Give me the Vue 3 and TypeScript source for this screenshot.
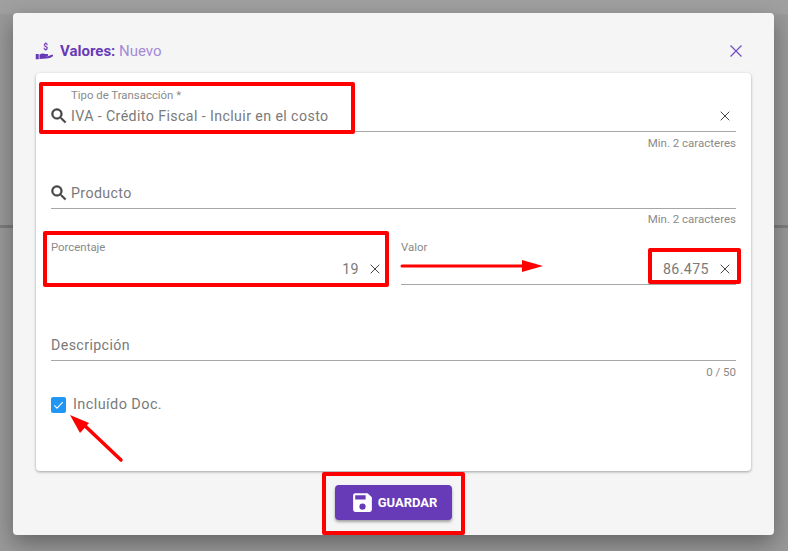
<template>
  <div class="backdrop">
    <div class="dialog">
      <header class="dialog-header">
        <svg class="title-icon" viewBox="0 0 24 24" width="18" height="18">
          <path d="M1 16h4v7H1z M6 22.500v-6l2.400-.9c2-.6 3.600-.4 5 .5h3c1.200 0 1.700 1.700.4 2.400l-3.800.4 4 .2 5.500-2.100c1.400-.4 2.300 1.100 1.200 2-2.500 1.900-5.400 3-8.700 3z" fill="#673ab7" />
          <text x="14" y="10" class="dollar">$</text>
        </svg>
        <span class="title"><b>Valores:</b> Nuevo</span>
        <svg class="close" viewBox="0 0 14 14" width="14" height="14">
          <path d="M1.500 1.500l11 11M12.500 1.500l-11 11" stroke="#7350c4" stroke-width="1.300" fill="none" />
        </svg>
      </header>

      <section class="card">
        <div class="field first">
          <label class="float-label indented">Tipo de Transacción *</label>
          <div class="control">
            <svg class="search" viewBox="0 0 24 24" width="20" height="20"><path :d="searchPath" /></svg>
            <span class="value">IVA - Crédito Fiscal - Incluir en el costo</span>
            <svg class="clear" viewBox="0 0 10 10" width="10" height="10"><path :d="clearPath" /></svg>
          </div>
        </div>
        <div class="hint">Min. 2 caracteres</div>

        <div class="field second">
          <div class="control">
            <svg class="search" viewBox="0 0 24 24" width="20" height="20"><path :d="searchPath" /></svg>
            <span class="value">Producto</span>
          </div>
        </div>
        <div class="hint">Min. 2 caracteres</div>

        <div class="row">
          <div v-for="item in amounts" :key="item.label" class="field amount">
            <label class="float-label">{{ item.label }}</label>
            <div class="control right">
              <span class="value">{{ item.value }}</span>
              <svg class="clear" viewBox="0 0 10 10" width="10" height="10"><path :d="clearPath" /></svg>
            </div>
          </div>
        </div>

        <div class="field description">
          <div class="control">
            <span class="value">Descripción</span>
          </div>
        </div>
        <div class="hint">0 / 50</div>

        <div class="check">
          <span class="box">
            <svg viewBox="0 0 16 16" width="16" height="16"><path d="M3.500 8.300l3 3 6-6.300" stroke="#fff" stroke-width="1.200" fill="none" /></svg>
          </span>
          <span class="check-label">Incluído Doc.</span>
        </div>
      </section>

      <footer class="dialog-footer">
        <button class="save" type="button">
          <svg viewBox="0 0 24 24" width="25" height="25"><path d="M17 3H5a2 2 0 0 0-2 2v14a2 2 0 0 0 2 2h14a2 2 0 0 0 2-2V7zm-5 16a3 3 0 1 1 0-6 3 3 0 0 1 0 6zm3-10H5V5h10z" fill="#fff" /></svg>
          <span>GUARDAR</span>
        </button>
      </footer>
    </div>

    <!-- red annotations drawn over the screenshot -->
    <div v-for="mark in marks" :key="mark.left" class="mark" :style="mark" />
    <svg class="arrows" viewBox="0 0 788 551" width="788" height="551">
      <path d="M402 266H523" stroke="#f00" stroke-width="3" stroke-linecap="round" />
      <path d="M522 260L543 266 522 272z" fill="#f00" />
      <path d="M121 460L83 424" stroke="#f00" stroke-width="3.500" stroke-linecap="round" />
      <path d="M70 415L89 423 80 433z" fill="#f00" />
    </svg>
  </div>
</template>

<script setup lang="ts">
const searchPath =
  'M15.500 14h-.79l-.28-.27A6.471 6.471 0 0 0 16 9.500 6.500 6.500 0 1 0 9.500 16c1.610 0 3.090-.59 4.230-1.570l.27.28v.79l5 4.990L20.490 19l-4.990-5zm-6 0C7.010 14 5 11.990 5 9.500S7.010 5 9.500 5 14 7.010 14 9.500 11.990 14 9.500 14z'
const clearPath = 'M.7.7l8.600 8.600M9.300.7L.7 9.300'

const amounts = [
  { label: 'Porcentaje', value: '19' },
  { label: 'Valor', value: '86.475' },
]

const marks = [
  { left: '39px', top: '82px', width: '316px', height: '52px' },
  { left: '43px', top: '231px', width: '346px', height: '56px' },
  { left: '648px', top: '248px', width: '93px', height: '36px' },
  { left: '322px', top: '472px', width: '143px', height: '63px' },
]
</script>

<style scoped>
.backdrop {
  position: relative;
  width: 788px;
  height: 551px;
  overflow: hidden;
  background: linear-gradient(
    #a0a0a0 14px,
    #999 14px,
    #999 225px,
    #7d7d7d 225px,
    #7d7d7d 228px,
    #999 228px
  );
  font-family: Roboto, "Liberation Sans", sans-serif;
  color: #757575;
}

.dialog {
  position: absolute;
  left: 13px;
  top: 13px;
  width: 761px;
  height: 522px;
  display: flex;
  flex-direction: column;
  padding: 0 23px;
  box-sizing: border-box;
  background: #f5f5f5;
  border-radius: 4px;
  box-shadow: 0 8px 22px rgba(0, 0, 0, 0.35);
}

.dialog-header {
  height: 60px;
  flex: none;
  display: flex;
  align-items: center;
  padding-top: 16px;
  box-sizing: border-box;
}

.title-icon {
  margin-left: -1px;
  margin-right: 7px;
  flex: none;
}

.dollar {
  font-size: 11px;
  font-weight: 700;
  fill: #673ab7;
  text-anchor: middle;
}

.title {
  font-size: 15px;
  color: #a48ad8;
}

.title b {
  color: #673ab7;
  font-weight: 700;
}

.close {
  margin-left: auto;
  margin-right: 8px;
}

.card {
  height: 398px;
  flex: none;
  padding: 0 15px;
  box-sizing: border-box;
  background: #fff;
  border-radius: 4px;
  box-shadow: 0 1px 3px rgba(0, 0, 0, 0.35);
}

.field {
  position: relative;
  border-bottom: 1px solid #a6a6a6;
  display: flex;
  flex-direction: column;
  justify-content: flex-end;
  box-sizing: border-box;
}

.first {
  height: 59px;
}

.second {
  height: 55px;
}

.second + .hint {
  margin-top: -1px;
}

.row {
  display: flex;
  gap: 15px;
}

.amount {
  flex: 1;
  height: 55px;
}

.description {
  height: 76px;
}

.float-label {
  position: absolute;
  left: 0;
  top: 11px;
  font-size: 11.400px;
  line-height: 12px;
  color: #8a8a8a;
}

.float-label.indented {
  left: 20px;
  top: 16px;
}

.control {
  height: 30px;
  display: flex;
  align-items: center;
}

.control.right {
  justify-content: flex-end;
}

.value {
  font-size: 14.200px;
  letter-spacing: 0.4px;
  color: #7a7a7a;
}

.search {
  fill: #444;
  stroke: #444;
  stroke-width: 0.6;
  margin-left: -2.500px;
  margin-right: 2.500px;
  flex: none;
}

.clear {
  stroke: #444;
  stroke-width: 1;
  fill: none;
  flex: none;
  margin-left: 11px;
  margin-right: 6px;
}

.first .clear {
  margin-left: auto;
}

.hint {
  height: 22px;
  padding-top: 5px;
  box-sizing: border-box;
  text-align: right;
  font-size: 11.500px;
  line-height: 13px;
  color: #8a8a8a;
}

.check {
  margin-top: 13px;
  display: flex;
  align-items: center;
  gap: 7px;
}

.box {
  width: 15px;
  height: 16px;
  border-radius: 2px;
  background: #2196f3;
  display: flex;
  align-items: center;
  justify-content: center;
}

.check-label {
  font-size: 14.500px;
  letter-spacing: 0.4px;
  color: #7a7a7a;
}

.dialog-footer {
  flex: 1;
  display: flex;
  justify-content: center;
  align-items: center;
  padding-bottom: 1px;
}

.save {
  width: 117px;
  height: 35px;
  display: flex;
  align-items: center;
  justify-content: center;
  gap: 3px;
  padding: 0;
  border: 0;
  border-radius: 4px;
  background: #673ab7;
  color: #fff;
  font-family: inherit;
  font-size: 13px;
  font-weight: 700;
  box-shadow: 0 2px 3px rgba(0, 0, 0, 0.35);
}

.mark {
  position: absolute;
  box-sizing: border-box;
  border: 4px solid #f00;
  border-radius: 2px;
  pointer-events: none;
}

.arrows {
  position: absolute;
  left: 0;
  top: 0;
  pointer-events: none;
}
</style>
